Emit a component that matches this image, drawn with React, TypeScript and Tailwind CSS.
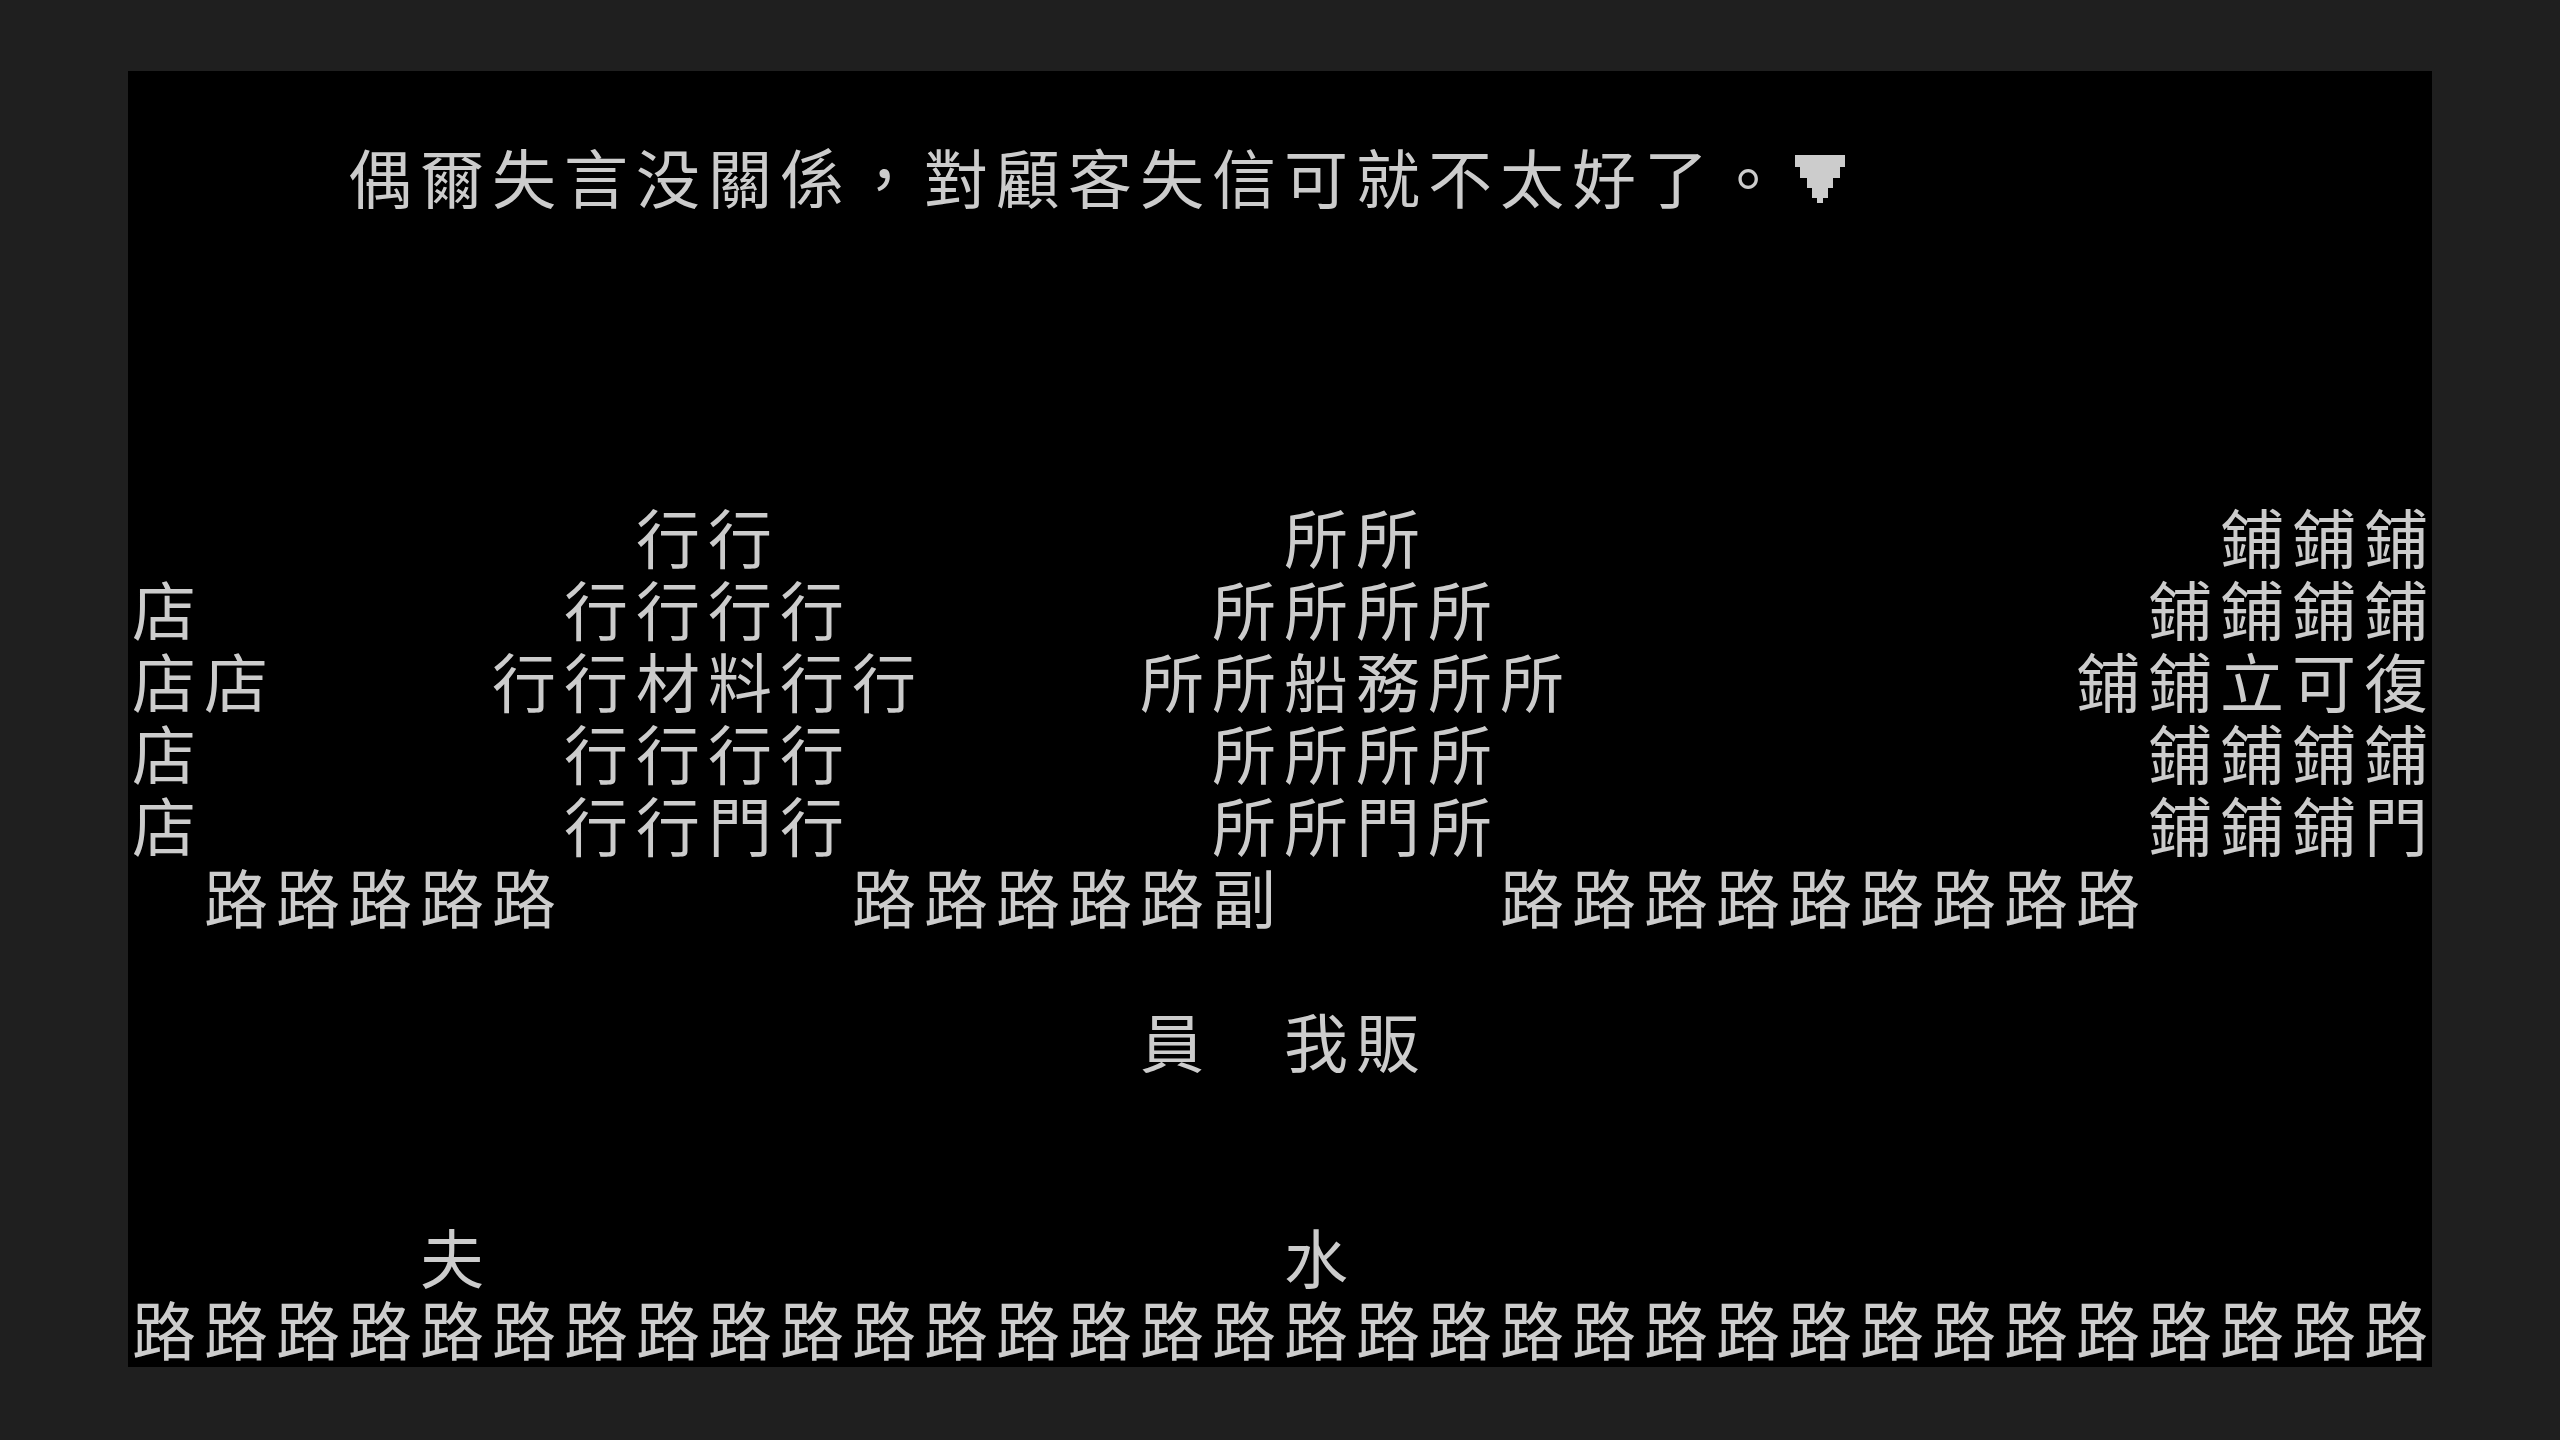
import React from "react";

const B = "　";
const pad = (s: string) => {
  const arr = Array.from(s);
  while (arr.length < 32) arr.push(B);
  return arr.slice(0, 32);
};

const rows: string[][] = [
  pad(""),
  pad("　　　偶爾失言没關係，對顧客失信可就不太好了。▼"),
  pad(""),
  pad(""),
  pad(""),
  pad(""),
  pad("　　　　　　　行行　　　　　　　所所　　　　　　　　　　　鋪鋪鋪"),
  pad("店　　　　　行行行行　　　　　所所所所　　　　　　　　　鋪鋪鋪鋪"),
  pad("店店　　　行行材料行行　　　所所船務所所　　　　　　　鋪鋪立可復"),
  pad("店　　　　　行行行行　　　　　所所所所　　　　　　　　　鋪鋪鋪鋪"),
  pad("店　　　　　行行門行　　　　　所所門所　　　　　　　　　鋪鋪鋪門"),
  pad("　路路路路路　　　　路路路路路副　　　路路路路路路路路路"),
  pad(""),
  pad("　　　　　　　　　　　　　　員　我販"),
  pad(""),
  pad(""),
  pad("　　　　夫　　　　　　　　　　　水"),
  pad("路路路路路路路路路路路路路路路路路路路路路路路路路路路路路路路路"),
];

function Cursor() {
  return (
    <svg width="50" height="48" viewBox="0 0 50 48" className="block">
      <polygon
        fill="#cccccc"
        points="0,0 50,0 50,12 45,12 45,23 38,23 38,33 33,33 33,43 28,43 28,48 22,48 22,43 17,43 17,33 12,33 12,23 5,23 5,12 0,12"
      />
    </svg>
  );
}

export default function App() {
  return (
    <div className="min-h-screen w-full bg-[#1f1f1f] pt-[71px] pl-[128px]">
      <div
        className="grid w-[2304px] h-[1296px] grid-cols-[repeat(32,72px)] grid-rows-[repeat(18,72px)] bg-black text-[#cccccc] text-[64px] leading-[64px]"
        style={{ fontFamily: '"Noto Sans CJK TC", "Noto Sans CJK SC", sans-serif' }}
      >
        {rows.map((r, ri) =>
          r.map((ch, ci) => (
            <span
              key={`${ri}-${ci}`}
              className={
                ch === "▼"
                  ? "flex h-[72px] w-[72px] items-center justify-center"
                  : "flex h-[72px] w-[72px] items-center justify-center pb-[8px]"
              }
            >
              {ch === "▼" ? <Cursor /> : ch === B ? "" : ch}
            </span>
          ))
        )}
      </div>
    </div>
  );
}
